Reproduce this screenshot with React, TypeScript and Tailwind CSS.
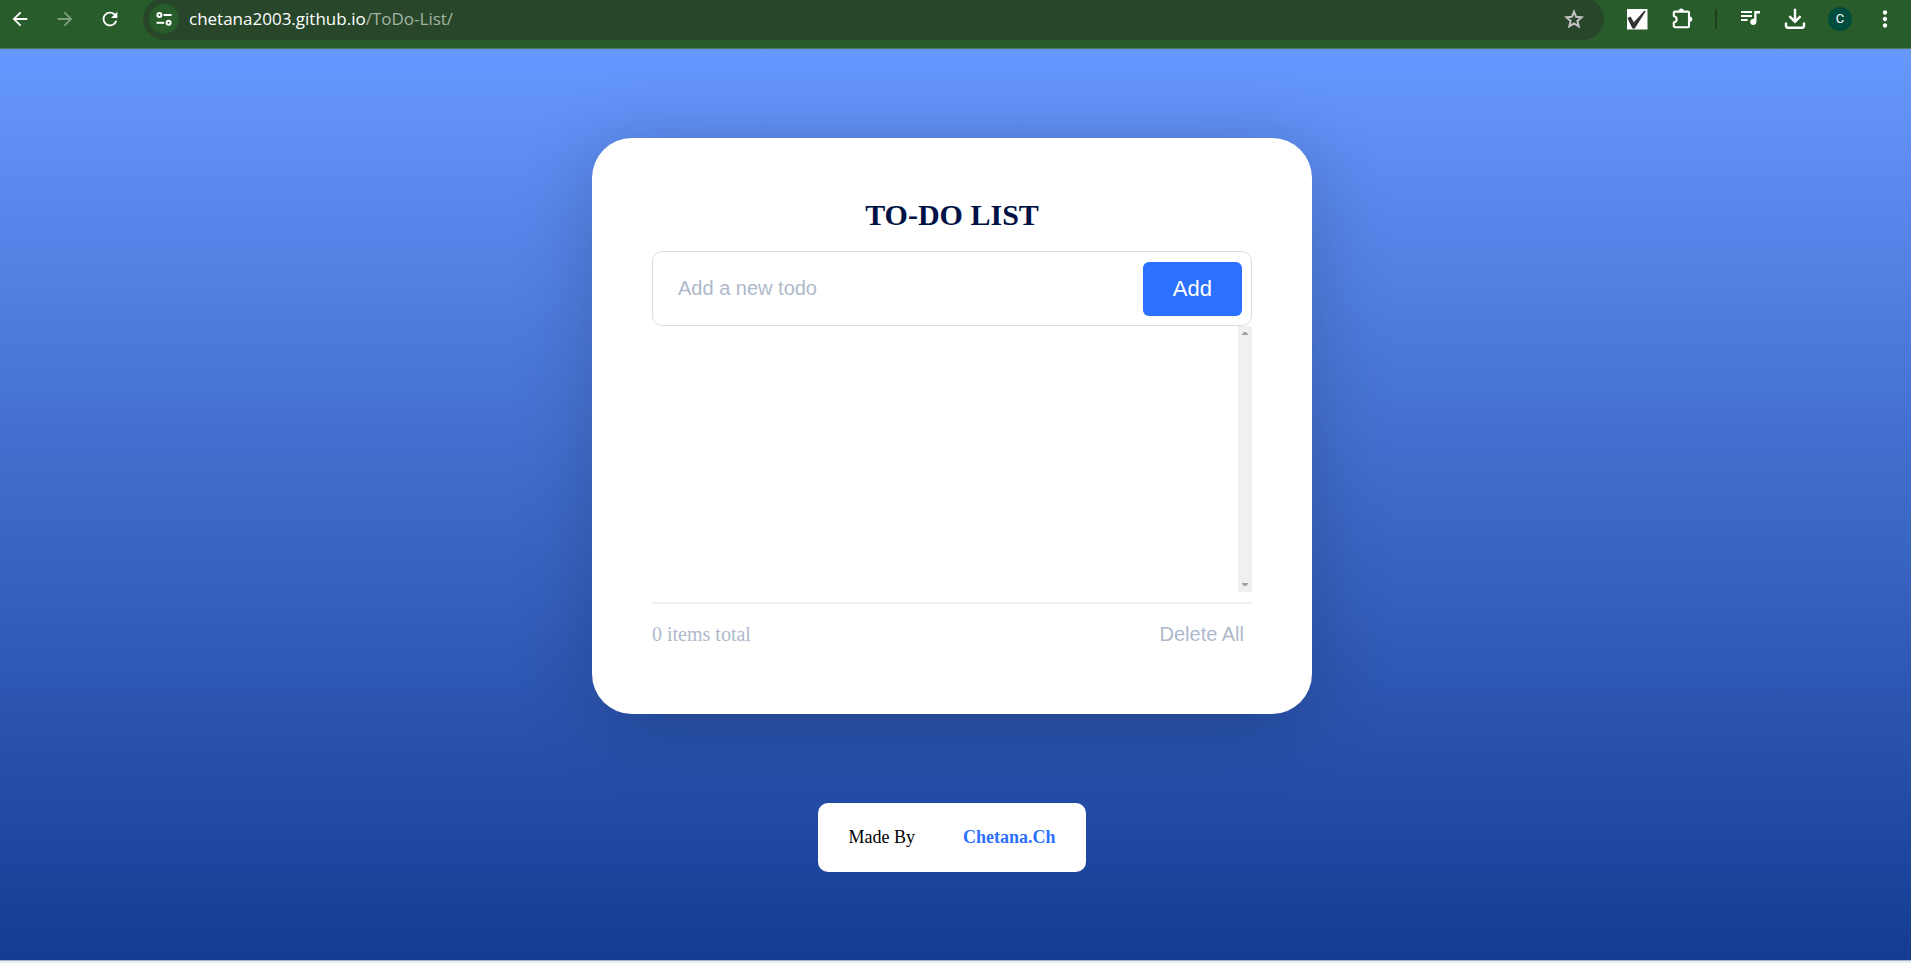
import { useState } from "react";
import type { FormEvent } from "react";
import { MdArrowBack, MdArrowForward, MdMoreVert, MdRefresh } from "react-icons/md";

function SiteSettingsIcon() {
  return (
    <svg width="16" height="16" viewBox="0 0 16 16" fill="none" stroke="currentColor" strokeWidth="2" aria-hidden="true">
      <circle cx="3.4" cy="4" r="2" />
      <path d="M7.6 4H15.6" />
      <circle cx="12.6" cy="11.8" r="2" />
      <path d="M0.6 11.8H8.2" />
    </svg>
  );
}

function StarIcon() {
  return (
    <svg width="24" height="24" viewBox="0 0 24 24" fill="none" stroke="currentColor" strokeWidth="2" aria-hidden="true">
      <path d="M12 4.7L14.1 9.8L19.6 10.3L15.4 13.9L16.7 19.3L12 16.4L7.3 19.3L8.6 13.9L4.4 10.3L9.9 9.8Z" />
    </svg>
  );
}

function PuzzleIcon() {
  return (
    <svg width="24" height="24" viewBox="0 0 24 24" fill="none" aria-hidden="true">
      <path
        d="M5 4.6H17.8A1.2 1.2 0 0 1 19 5.8V19A1.2 1.2 0 0 1 17.8 20.2H5A1.2 1.2 0 0 1 3.8 19V15.6C7.6 14.6 7.6 10 3.8 9V5.8A1.2 1.2 0 0 1 5 4.6Z"
        stroke="currentColor"
        strokeWidth="2.1"
        strokeLinejoin="round"
      />
      <path d="M8.8 4a2.5 2.6 0 0 1 5 0ZM19.6 9.6a2.7 2.7 0 0 1 0 5.4Z" fill="currentColor" />
    </svg>
  );
}

function CheckboxIcon() {
  return (
    <svg width="24" height="24" viewBox="0 0 24 24" aria-hidden="true">
      <rect x="2" y="2" width="20.5" height="20.5" fill="#fff" />
      <path d="M2.4 11L5.6 9.4L8.8 15.2L19.6 3.4L20.6 4.4L9.8 21.4H7.4Z" fill="#333" />
    </svg>
  );
}

function MediaIcon() {
  return (
    <svg width="24" height="24" viewBox="0 0 24 24" aria-hidden="true">
      <path d="M3 5H14M3 9H14M3 13H9.6" stroke="currentColor" strokeWidth="2" fill="none" />
      <path d="M16.2 4H22V6.4H18.5V14.6A3.2 3.2 0 1 1 16.2 11.8Z" fill="currentColor" />
    </svg>
  );
}

function DownloadIcon() {
  return (
    <svg width="24" height="24" viewBox="0 0 24 24" fill="none" stroke="currentColor" strokeWidth="2.4" aria-hidden="true">
      <path d="M12 1.8V14.5M6.4 9.2L12 14.8L17.6 9.2" />
      <path d="M3 15.6V18.8A1.9 1.9 0 0 0 4.9 20.7H19.1A1.9 1.9 0 0 0 21 18.8V15.6" />
    </svg>
  );
}

const toolButton = "flex size-6 shrink-0 items-center justify-center text-white";

function BrowserBar() {
  return (
    <header className="overflow-hidden border-b border-[#4b7a58] bg-[#285d2b] pb-[10px]">
      <div className="flex h-[38px] items-center gap-[21px] pr-[14px] pl-2">
        <button type="button" aria-label="Back" className={toolButton}>
          <MdArrowBack size={22} />
        </button>
        <button type="button" aria-label="Forward" className="flex size-6 shrink-0 items-center justify-center text-[#7f9f80]">
          <MdArrowForward size={22} />
        </button>
        <button type="button" aria-label="Reload" className={toolButton}>
          <MdRefresh size={22} />
        </button>
        <div className="flex h-[42px] min-w-0 flex-1 items-center rounded-full bg-[#28472a] pr-[18px] pl-[6px]">
          <button
            type="button"
            aria-label="Site information"
            className="flex size-[30px] shrink-0 items-center justify-center rounded-full bg-[#285d2b] text-white"
          >
            <SiteSettingsIcon />
          </button>
          <p className="ml-[10px] flex-1 truncate font-['Open_Sans',sans-serif] text-[17px] leading-6 text-[#a3b3a2]">
            <span className="text-white">chetana2003.github.io</span>/ToDo-List/
          </p>
          <button type="button" aria-label="Bookmark" className="flex size-6 shrink-0 items-center justify-center text-[#c3c3c3]">
            <StarIcon />
          </button>
        </div>
        <button type="button" aria-label="Tasks extension" className={toolButton}>
          <CheckboxIcon />
        </button>
        <button type="button" aria-label="Extensions" className={toolButton}>
          <PuzzleIcon />
        </button>
        <div className="h-5 w-0.5 shrink-0 bg-[#1c3f1e]" />
        <button type="button" aria-label="Media" className={toolButton}>
          <MediaIcon />
        </button>
        <button type="button" aria-label="Downloads" className={toolButton}>
          <DownloadIcon />
        </button>
        <button
          type="button"
          aria-label="Profile"
          className="flex size-6 shrink-0 items-center justify-center rounded-full bg-[#004d40] font-[Roboto,sans-serif] text-[13px] text-white"
        >
          C
        </button>
        <button type="button" aria-label="Menu" className={toolButton}>
          <MdMoreVert size={26} className="shrink-0" />
        </button>
      </div>
    </header>
  );
}

function TodoCard() {
  const [todos, setTodos] = useState<string[]>([]);
  const [draft, setDraft] = useState("");

  function addTodo(event: FormEvent) {
    event.preventDefault();
    const text = draft.trim();
    if (text) {
      setTodos([...todos, text]);
      setDraft("");
    }
  }

  return (
    <main className="w-full max-w-[720px] rounded-[40px] bg-white p-[60px] shadow-[0_10px_80px_rgba(0,0,0,0.2)]">
      <h1 className="pb-5 text-center text-[30px] leading-[33px] font-bold text-[#001245]">TO-DO LIST</h1>
      <form
        onSubmit={addTodo}
        className="flex h-[75px] items-stretch rounded-[10px] border border-[#dddddd] pt-[10px] pr-[9px] pb-[9px] pl-[25px]"
      >
        <input
          type="text"
          aria-label="New todo"
          placeholder="Add a new todo"
          value={draft}
          onChange={(event) => setDraft(event.target.value)}
          className="min-w-0 flex-1 pb-0.5 font-['Liberation_Sans',sans-serif] text-[20px] text-[#001245] outline-none placeholder:text-[#aeb9cc]"
        />
        <button
          type="submit"
          className="rounded-[6px] bg-[#2c70ff] px-[30px] pb-0.5 font-['Liberation_Sans',sans-serif] text-[22px] text-white"
        >
          Add
        </button>
      </form>
      <div className="flex h-[266px]">
        <ul className="min-w-0 flex-1 overflow-hidden text-[20px] text-[#001245]">
          {todos.map((todo, index) => (
            <li key={index} className="px-[25px] py-2">
              {todo}
            </li>
          ))}
        </ul>
        <div className="flex w-[14px] flex-col items-center justify-between bg-[#f0f0f0] py-[6px] text-[#a3a3a3]" aria-hidden="true">
          <svg width="6" height="3" viewBox="0 0 6 3">
            <path d="M0 3V2L2 0H4L6 2V3Z" fill="currentColor" />
          </svg>
          <svg width="6" height="3" viewBox="0 0 6 3">
            <path d="M0 0H6V1L4 3H2L0 1Z" fill="currentColor" />
          </svg>
        </div>
      </div>
      <div className="mt-[10px] flex h-[52px] items-center justify-between border-t-2 border-[#eeeeee] pt-[10px] text-[20px] text-[#aeb9cc]">
        <span>{todos.length} items total</span>
        <button type="button" onClick={() => setTodos([])} className="px-2 font-['Liberation_Sans',sans-serif]">
          Delete All
        </button>
      </div>
    </main>
  );
}

export default function App() {
  return (
    <div className="flex min-h-screen flex-col font-['Liberation_Serif',serif]">
      <BrowserBar />
      <div className="flex flex-1 flex-col items-center gap-[89px] bg-linear-to-b from-[#6798ff] to-[#153c92] pt-[89px] pr-[7px] pb-[88px]">
        <TodoCard />
        <footer className="flex h-[69px] items-center gap-12 rounded-[10px] bg-white px-[30px] text-[18px] text-black">
          <span>Made By</span>
          <a href="#chetana" className="font-bold text-[#2c70ff]">
            Chetana.Ch
          </a>
        </footer>
      </div>
      <div className="h-[3px] border-t border-[#a9b4c8] bg-[#e6eef8]" />
    </div>
  );
}
